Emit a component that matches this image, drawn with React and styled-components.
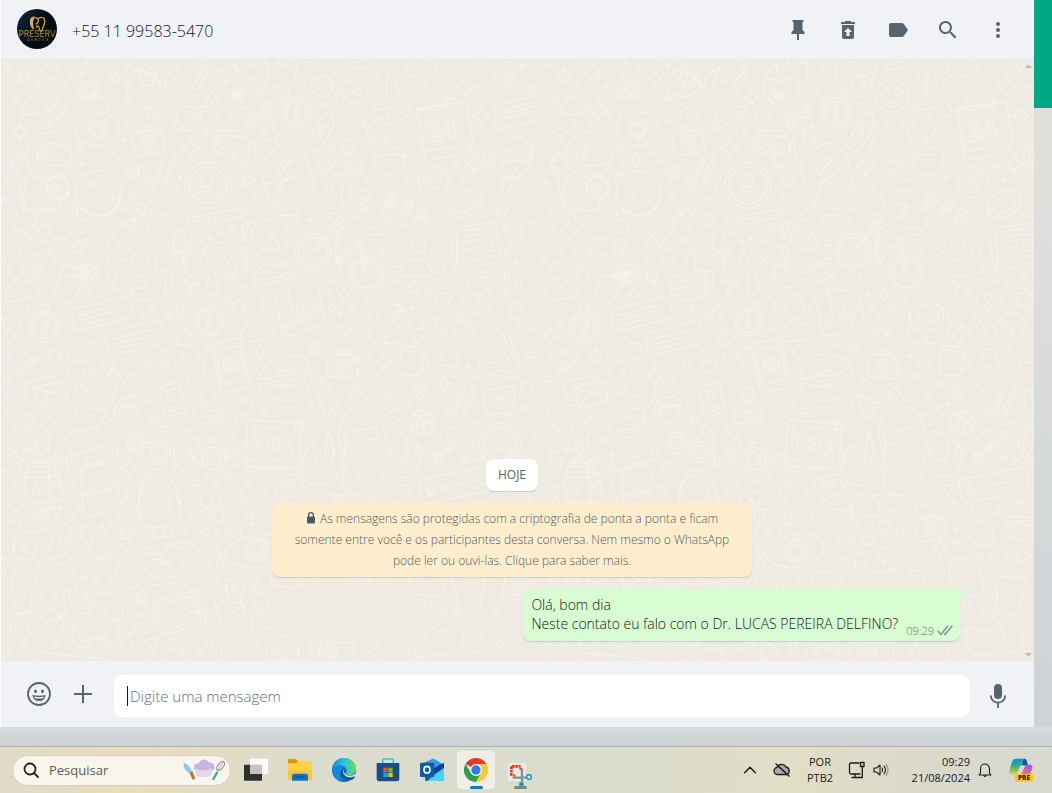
import React from 'react';
import styled, { createGlobalStyle } from 'styled-components';

const GlobalStyle = createGlobalStyle`
* {
	box-sizing: border-box;
}
body {
	margin: 0;
	font-family: "Open Sans", "Noto Sans", sans-serif;
	color: #111b21;
}
button, input {
	font-family: inherit;
}
`;

const Desktop = styled.div`
	display: flex;
	flex-direction: column;
	height: 100vh;
	overflow: hidden;
	background: linear-gradient(#d9dbdb, #ccd2d6 20px, #d2d8db) bottom / 100% 68px no-repeat #d3d7da;
`;

const Browser = styled.div`
	display: flex;
	flex: 1;
	min-height: 0;
	margin-bottom: 19px;
`;

const Chat = styled.main`
	display: flex;
	flex-direction: column;
	flex: 1;
	border-left: 1px solid #fff;
	background-color: #f0f2f5;
`;

const Side = styled.div`
	width: 18px;
	background: linear-gradient(#00a884 108px, #e0dfdc 108px, #dcdddb 300px, #cdd3d7);
`;

const Header = styled.header`
	display: flex;
	align-items: center;
	height: 60px;
	padding: 0 24px 1px 16px;
	border-bottom: 1px solid #e9e9ec;
`;

const Contact = styled.h1`
	flex: 1;
	margin: 0 0 0 15px;
	padding-top: 4px;
	font-size: 16px;
	font-weight: 350;
	line-height: 22px;
`;

const Actions = styled.div`
	display: flex;
	gap: 26px;
	padding-top: 2px;
`;

const IconButton = styled.button`
	display: flex;
	padding: 0;
	border: 0;
	background: none;
	color: #54656f;
`;

const Conversation = styled.section`
	position: relative;
	display: flex;
	flex: 1;
	background-color: #efeae2;
`;

const Wallpaper = styled.svg`
	position: absolute;
	inset: 0;
	width: 100%;
	height: 100%;
`;

const Messages = styled.div`
	position: relative;
	display: flex;
	flex: 1;
	flex-direction: column;
	align-items: center;
	justify-content: flex-end;
	gap: 12px;
	padding: 0 63px 20px;
`;

const Pill = styled.div`
	padding: 5px 12px 6px;
	border-radius: 8px;
	background-color: #fff;
	box-shadow: 0 1px 1px rgba(11, 20, 26, 0.15);
	color: #54656f;
	font-size: 12px;
	line-height: 21px;
`;

const Notice = styled.button`
	width: 480px;
	max-width: 100%;
	padding: 5px 12px 6px;
	border: 0;
	border-radius: 8px;
	background-color: #ffeecd;
	box-shadow: 0 1px 1px rgba(11, 20, 26, 0.15);
	color: #4b5b65;
	font-size: 12px;
	font-weight: 350;
	line-height: 21px;
	text-align: center;
	svg {
		margin-right: 1px;
		vertical-align: -1px;
	}
`;

const Bubble = styled.article`
	position: relative;
	display: flex;
	align-items: flex-end;
	align-self: flex-end;
	gap: 8px;
	padding: 6px 7px 8px 8px;
	border-radius: 8px 0 8px 8px;
	background-color: #d9fdd3;
	box-shadow: 0 1px 1px rgba(11, 20, 26, 0.15);
`;

const Tail = styled.svg`
	position: absolute;
	top: 0;
	left: 100%;
`;

const Text = styled.p`
	margin: 0;
	font-size: 14px;
	font-weight: 350;
	line-height: 19px;
`;

const Stamp = styled.span`
	display: flex;
	align-items: center;
	gap: 3px;
	height: 15px;
	margin-bottom: -5px;
	color: #667781;
	font-size: 11px;
	font-weight: 350;
	line-height: 15px;
`;

const Scroll = styled.div`
	position: relative;
	display: flex;
	flex-direction: column;
	justify-content: space-between;
	width: 11px;
	padding: 5px 2px;
`;

const Arrow = styled.i`
	border: 3px solid transparent;
	border-width: ${(props) => (props.$up ? '0 3px 3px' : '3px 3px 0')};
	border-${(props) => (props.$up ? 'bottom' : 'top')}-color: #b9b8b4;
`;

const Composer = styled.footer`
	display: flex;
	align-items: center;
	height: 66px;
	padding: 4px 24px 0 26px;
	gap: 16px;
`;

const Tools = styled.div`
	display: flex;
	gap: 20px;
	padding: 0 3px 4px 0;
`;

const InputBox = styled.label`
	display: flex;
	align-items: center;
	flex: 1;
	height: 42px;
	padding: 0 13px;
	border-radius: 8px;
	background-color: #fff;
`;

const Caret = styled.span`
	width: 1px;
	height: 20px;
	margin-right: 2px;
	background-color: #111b21;
`;

const Input = styled.input`
	flex: 1;
	min-width: 0;
	padding: 0;
	border: 0;
	outline: 0;
	background: none;
	font-size: ${(props) => props.$size}px;
	font-weight: ${(props) => props.$weight || 400};
	line-height: 20px;
	&::placeholder {
		color: ${(props) => props.$hint};
		opacity: 1;
	}
`;

const Taskbar = styled.nav`
	display: flex;
	align-items: center;
	justify-content: space-between;
	height: 47px;
	padding: 0 19px 0 12px;
	border-top: 1px solid #b1b2ae;
	background: linear-gradient(90deg, #dfdbc9, #e8dcb9 11%, #e5dcc0 18%, #dcdccf 30%, #d9dccd 55%, #e1dec6 76%, #dad9cb 88%, #d8d9d0);
`;

const Apps = styled.div`
	display: flex;
	align-items: center;
	gap: 6px;
`;

const Search = styled.label`
	display: flex;
	align-items: center;
	width: 219px;
	height: 31px;
	padding: 0 5px 0 10px;
	gap: 10px;
	border: 1px solid #d5cfb9;
	border-radius: 16px;
	background-color: #f8f5ec;
	color: #222;
`;

const AppButton = styled.button`
	display: flex;
	align-items: center;
	justify-content: center;
	position: relative;
	width: 38px;
	height: 38px;
	padding: 0;
	border: 0;
	border-radius: 4px;
	background-color: ${(props) => (props.$active ? '#f0eee7' : 'transparent')};
	&::after {
		content: "";
		position: absolute;
		bottom: 0;
		width: 13px;
		height: 3px;
		border-radius: 2px;
		background-color: ${(props) => props.$mark || 'transparent'};
	}
`;

const Tray = styled.div`
	display: flex;
	align-items: center;
	color: #1b1b1b;
`;

const TrayButton = styled.button`
	display: flex;
	justify-content: ${(props) => (props.$end ? 'flex-end' : 'center')};
	width: ${(props) => props.$w}px;
	padding: 0;
	border: 0;
	background: none;
	color: inherit;
	font-size: 11px;
	line-height: 16px;
	text-align: ${(props) => (props.$end ? 'right' : 'center')};
`;

// ---- wallpaper ----

const polar = (x, y, r, deg) => {
	const a = (deg * Math.PI) / 180;
	return `${(x + r * Math.cos(a)).toFixed(1)} ${(y + r * Math.sin(a)).toFixed(1)}`;
};

function Star({ at: [x, y, r] }) {
	const pts = [];
	for (let i = 0; i < 10; i++) {
		pts.push(polar(x, y, i % 2 ? r * 0.5 : r, i * 36 - 80));
	}
	return <polygon points={pts.join(' ')} />;
}

function Spark({ at: [x, y, r] }) {
	const q = r * 0.2;
	return (
		<path
			d={`M${x} ${y - r}Q${x + q} ${y - q} ${x + r} ${y}Q${x + q} ${y + q} ${x} ${y + r}Q${x - q} ${y + q} ${x - r} ${y}Q${x - q} ${y - q} ${x} ${y - r}z`}
		/>
	);
}

function Heart({ at: [x, y, s] }) {
	return (
		<path
			transform={`translate(${x} ${y}) rotate(-8) scale(${s})`}
			strokeWidth={3.6 / s}
			d="M0 10C-5 6-11 2-11-4c0-7 9-8 11-2 2-6 11-5 11 2C11 2 5 6 0 10z"
		/>
	);
}

function Camera({ at: [x, y, deg] }) {
	return (
		<g transform={`translate(${x} ${y}) rotate(${deg})`}>
			<rect x="-44" y="-28" width="88" height="66" rx="8" />
			<path d="M-22-28l5-12h32l6 12M-12-32h22" />
			<circle cy="5" r="20" />
			<circle cy="5" r="11" />
			<circle cy="5" r="4" />
			<circle cx="30" cy="-18" r="5" />
		</g>
	);
}

function Clock({ at: [x, y] }) {
	return (
		<g transform={`translate(${x} ${y})`}>
			<circle r="41" />
			<circle r="32" />
			<path d="M-4-16v16l-5 12c-1 5 5 6 7 2l6-12-3-19c-1-3-5-2-5 1zM8-46c0-14 18-12 19-2M-39-26c-10-9 0-19 10-11" />
		</g>
	);
}

function Face({ at: [x, y, r] }) {
	return (
		<g>
			<circle cx={x} cy={y} r={r} />
			<Heart at={[x - r * 0.42, y - 3, 1.1]} />
			<Heart at={[x + r * 0.35, y - 12, 1.1]} />
			<path d={`M${x - 14} ${y + 22}q16 0 28-8c6 22-22 26-28 8z`} />
		</g>
	);
}

function Cloud({ at: [x, y, s] }) {
	return (
		<path
			transform={`translate(${x} ${y}) scale(${s})`}
			strokeWidth={3.6 / s}
			d="M-20 22c-20 0-23-26-5-28 2-22 30-22 34-6 20-6 30 14 18 24-8 9-28 10-47 10z"
		/>
	);
}

function Person({ at: [x, y] }) {
	return (
		<g>
			<ellipse cx={x} cy={y - 34} rx="18" ry="21" />
			<path d={`M${x - 42} ${y + 44}c-6-40 16-52 42-52s48 14 42 48c0 8-4 8-14 8l-28 1-34 1c-5 0-8-2-8-6z`} />
			<Heart at={[x + 10, y + 28, 1.7]} />
		</g>
	);
}

function Checks({ at: [x, y] }) {
	return (
		<path
			transform={`translate(${x} ${y})`}
			d="M-52 22l7-7 20 16 24-66c3-8 12-5 9 3l-30 78zM4 32l26-72c3-9 13-6 10 2l-26 74z"
		/>
	);
}

const LETTERING = { fontFamily: '"Open Sans", sans-serif', fontWeight: 700 };

const STARS = [
	[68, 47, 22], [446, 151, 28], [787, 216, 30], [721, 352, 22], [229, 544, 24], [372, 567, 26], [1456, 434, 23],
	[1201, 658, 22], [1409, 695, 37], [692, 717, 24], [535, 808, 31], [159, 858, 23], [236, 957, 22], [870, 1060, 23],
	[1029, 969, 23], [671, 1144, 22], [1566, 1083, 22],
];
const SPARKS = [
	[370, 3, 22], [335, 54, 19], [169, 145, 29], [58, 210, 25], [615, 109, 21], [552, 254, 29], [279, 290, 20],
	[945, 309, 26], [1355, 76, 30], [1397, 162, 25], [1380, 301, 28], [86, 494, 30], [998, 682, 18], [753, 847, 22],
	[1113, 878, 24], [28, 804, 25], [144, 1062, 28], [160, 1163, 20], [1289, 941, 22], [823, 4, 22],
];
const HEARTS = [
	[486, 464, 2], [1057, 393, 1.7], [490, 891, 2], [284, 205, 2.5], [284, 207, 1.8],
];
const RINGS = [
	[25, 17, 7], [110, 70, 10], [144, 79, 5], [190, 75, 9], [240, 41, 9], [204, 45, 4], [250, 8, 6], [285, 31, 5],
	[45, 113, 10], [61, 162, 5], [102, 186, 5], [147, 188, 8], [200, 159, 7], [234, 152, 6], [312, 134, 5], [343, 128, 7],
	[378, 113, 5], [408, 152, 7], [373, 179, 9], [360, 231, 6], [228, 257, 11], [32, 245, 6], [326, 272, 7], [239, 303, 6],
	[351, 290, 8], [19, 355, 7], [12, 408, 9], [382, 391, 12], [357, 435, 7], [443, 384, 6], [487, 409, 13], [522, 341, 5],
	[513, 375, 6], [587, 10, 11], [642, 31, 6], [535, 62, 7], [575, 104, 5], [628, 166, 6], [669, 160, 6], [597, 206, 10],
	[799, 86, 12], [839, 89, 5], [862, 217, 5], [940, 130, 8], [1097, 50, 7], [1178, 62, 9], [1236, 104, 8], [1298, 61, 7],
	[1413, 83, 12], [1473, 9, 7], [1518, 19, 9], [1547, 85, 10], [1127, 159, 6], [1056, 187, 8], [1078, 240, 8], [1201, 226, 10],
	[1327, 307, 9], [1345, 348, 6], [1371, 320, 5], [1181, 343, 8], [1065, 349, 7], [957, 368, 13], [966, 409, 5], [904, 433, 9],
	[866, 433, 7], [740, 394, 7], [704, 391, 5], [725, 435, 12], [1111, 435, 7], [1066, 429, 5], [1129, 471, 11], [1175, 477, 8],
	[1238, 465, 9], [1407, 453, 5], [1503, 410, 7], [1545, 427, 7], [1470, 485, 9], [1107, 554, 8], [927, 474, 7], [899, 465, 6],
	[838, 531, 11], [747, 567, 6], [675, 489, 11], [641, 496, 11], [610, 518, 6], [586, 526, 6], [557, 504, 8], [461, 521, 5],
	[432, 485, 5], [418, 521, 12], [297, 498, 15], [252, 520, 5], [127, 525, 8], [40, 486, 8], [40, 446, 11], [12, 583, 8],
	[59, 561, 7], [102, 563, 7], [145, 555, 10], [159, 579, 7], [189, 566, 6], [312, 583, 7], [140, 631, 6],
	[260, 679, 9], [286, 681, 7], [12, 752, 9], [48, 733, 6], [59, 767, 7], [82, 721, 6], [413, 735, 5], [441, 722, 8],
	[658, 690, 9], [740, 681, 7], [761, 693, 8], [774, 724, 13], [676, 780, 8], [604, 837, 8], [576, 855, 9], [532, 862, 6],
	[477, 843, 7], [427, 885, 14], [381, 922, 12], [418, 939, 6], [368, 874, 6], [298, 878, 6], [270, 908, 13], [242, 904, 6],
	[200, 904, 6], [65, 849, 9], [30, 857, 8], [22, 926, 12], [30, 969, 10], [22, 1027, 6], [178, 1031, 7], [186, 1106, 11],
	[77, 1119, 11], [27, 1128, 5], [208, 1140, 5], [433, 990, 9], [448, 1044, 12], [545, 930, 6], [592, 909, 6], [590, 880, 6],
	[705, 985, 9], [732, 996, 7], [768, 1020, 12], [814, 1012, 6], [838, 1014, 7], [687, 1050, 6], [712, 1030, 7], [616, 1104, 10],
	[567, 1099, 7], [548, 1076, 10], [677, 1094, 6], [820, 825, 6], [855, 825, 9], [962, 720, 12], [1025, 720, 12], [986, 738, 7],
	[954, 679, 6], [964, 642, 9], [930, 633, 5], [883, 638, 6], [1064, 694, 6], [1118, 684, 8], [1153, 639, 8], [1244, 672, 9],
	[1270, 638, 6], [1328, 640, 8], [1357, 651, 6], [1408, 624, 12], [1441, 655, 6], [1470, 676, 9], [1343, 692, 6], [1194, 720, 7],
	[1226, 771, 8], [1265, 827, 6], [1073, 860, 7], [1094, 920, 10], [1162, 939, 12], [1128, 972, 12], [1087, 963, 6], [1062, 986, 6],
	[936, 930, 9], [906, 995, 7], [957, 954, 5], [1380, 915, 9], [1320, 915, 6], [1359, 888, 6], [1540, 773, 12], [1540, 856, 12],
	[1523, 1010, 12], [1471, 1036, 9], [1263, 1024, 7], [1198, 1104, 9], [912, 1120, 9], [882, 1150, 8], [1379, 1161, 8], [1349, 1158, 6],
];

// lower part of the tile
const LOW_STARS = [[380, 282, 24], [268, 423, 30], [426, 473, 22], [963, 361, 29], [1451, 351, 25]];
const LOW_SPARKS = [[388, 87, 27], [49, 195, 26], [1199, 322, 24], [1130, 636, 26]];
const LOW_RINGS = [
	[77, 32, 7], [43, 139, 6], [217, 133, 7], [12, 91, 6], [37, 246, 8], [218, 271, 10], [155, 294, 6], [180, 299, 7],
	[207, 299, 9], [141, 318, 9], [228, 334, 6], [260, 362, 7], [305, 258, 7], [331, 250, 7], [356, 232, 6], [387, 233, 10],
	[317, 283, 7], [305, 311, 6], [357, 317, 8], [12, 355, 7], [12, 397, 7], [108, 419, 8], [122, 465, 6], [162, 470, 8],
	[157, 502, 12], [179, 525, 8], [122, 534, 8], [122, 611, 5], [171, 611, 9], [236, 491, 6], [255, 472, 9], [228, 447, 6],
	[318, 401, 9], [331, 424, 6], [422, 525, 9], [411, 560, 12], [438, 574, 6], [391, 581, 6], [395, 608, 6], [530, 70, 9],
	[551, 92, 6], [576, 97, 6], [583, 129, 11], [562, 152, 7], [570, 188, 11], [573, 228, 6], [556, 271, 5], [619, 116, 5],
	[648, 126, 9], [709, 75, 8], [724, 46, 6], [745, 129, 12], [785, 119, 6], [797, 154, 7], [721, 153, 6], [735, 176, 8],
	[617, 276, 12], [649, 276, 7], [686, 279, 9], [639, 297, 5], [613, 316, 6], [627, 434, 7], [648, 418, 7], [647, 447, 6],
	[761, 444, 9], [776, 418, 7], [642, 580, 8], [629, 615, 12], [599, 630, 8], [727, 596, 9], [761, 615, 12], [752, 639, 7],
	[838, 80, 10], [808, 92, 6], [787, 212, 6], [817, 229, 7], [861, 295, 5], [896, 364, 12], [920, 357, 6], [914, 386, 6],
	[955, 249, 8], [1017, 354, 6], [1033, 367, 7], [1053, 209, 8], [1243, 185, 8], [1261, 214, 11], [1295, 209, 6], [1248, 271, 7],
	[1249, 304, 9], [1276, 323, 5], [1322, 350, 8], [1362, 352, 12], [1401, 342, 8], [1355, 387, 6], [1179, 376, 7], [1369, 218, 9],
	[1377, 196, 5], [1352, 27, 8], [1394, 56, 12], [1421, 20, 6], [1447, 48, 6], [1370, 516, 7],
];

function UpperDoodles() {
	return (
		<g transform="translate(-1 0) scale(0.3444)">
			{STARS.map((s) => <Star key={s} at={s} />)}
			{SPARKS.map((s) => <Spark key={s} at={s} />)}
			{HEARTS.map((s) => <Heart key={s} at={s} />)}
			{RINGS.map(([x, y, r]) => <circle key={`${x}-${y}`} cx={x} cy={y} r={r * 0.75} />)}
			<g {...LETTERING} fontSize="66">
				<text x="222" y="118" transform="rotate(-8 222 118)">42</text>
				<text x="1240" y="236" transform="rotate(-6 1240 236)" fontSize="78">24</text>
				<text x="1108" y="418" transform="rotate(28 1108 418)" fontSize="58">B F F</text>
				<text x="674" y="112" fontSize="38">W</text>
			</g>
			{/* dog paw, rocket, flame heart */}
			<path d="M106 4c8 30 44 56 62 52 16-12-8-44-26-66M118-2l26 28M134-6l20 26" />
			<path d="M414 18c-30 16-36 30-52 48l14 2-12 52c18-4 8-18 34-22l10 10c28 0 52-18 66-28M386 34c40-12 68 12 84 46M416 8c28 16 46 44 54 72M410 46c0-22 16-14 14 2 4-18 20-18 18-2l12 16c-10-4-14 4-6 16-12-8-20-8-34 4 8-16-2-22-14-28zM480 48l44-28-34 78c-10 0-14-38-10-50zM558 78l38-52 12 2-34 56c-8 4-16 0-16-6zM572 54l20-24" />
			<path d="M706 142C676 128 648 108 648 80c0-30 38-30 50-8 16-28 54-20 54 10 0 20-24 46-46 60zM652 66c0-36 26-46 34-54l2 24c14-10 28-20 32-36l8 26 28-30-2 18 16-14c16 30 6 70-16 92" />
			<path d="M864-6l-8 74c0 8 50 24 56 26M980 10l-22 68M876 40l12 14-8 8 16-6M896 4l14 6M924 50l8 8M934 70l14-2M932 80l14-2" />
			<circle cx="935" cy="75" r="31" />
			<path d="M1000 18c18 14 80 10 92-20M1000 18c14-14 50-6 62-24M1134 32c20-4 12 58 26 68l60-34c14-8 22 8 8 20l-48 38c12 10 20 30 10 42-18-2-34-30-44-26l-60 6c-12-6 6-24 40-34-6-14-6-74 8-80z" />
			<Cloud at={[1228, 18, 1.3]} />
			<Cloud at={[102, 134, 1.1]} />
			<Cloud at={[1110, 200, 1.2]} />
			<Cloud at={[750, 786, 1.4]} />
			<Cloud at={[250, 842, 1.5]} />
			<Face at={[1023, 105, 47]} />
			<Face at={[1258, 354, 44]} />
			<path d="M1382-4l-6 18 12 2-2 28 24-36h-14l4-16M1430 42l66-4c4 10-16 36-20 46l-14-16zM1462 68l10-22" />
			{/* calendar */}
			<path d="M1210 146l28-6M1266 136l28-4M1322 126l26-4c6 0 8 6 8 12l18 106c0 10-100 16-142 26-12 2-6-60-22-120-1-4 4-6 10-6zM1228 210l6 78c1 8 130-20 134-26l-2-16" />
			<rect x="1242" y="116" width="22" height="30" rx="6" />
			<rect x="1296" y="110" width="22" height="30" rx="6" />
			{/* chat cards */}
			<path d="M1446 132l124-34M1446 132c-10 2-12 8-10 18l4 34-12 14 18-4 4 8 120-28M1454 146l114-28M1454 158l114-26M1456 172l90-22" />
			{/* flower badge, planet, glasses */}
			<path d="M224 190c2-22 16-26 30-30 12-16 28-10 34-6 16-8 28 2 32 8 18 2 18 18 22 26 14 14 0 24 0 30-8 16-20 16-26 20-14 14-24 12-34 8-14 10-24 2-30-6-24 4-22-12-24-20-10-8-12-18-4-30z" />
			<Camera at={[430, 235, -10]} />
			<circle cx="547" cy="170" r="36" />
			<path d="M516 176c-40 30-8 34 30 10s64-54 48-52l-20 6M504 188l80-40" fill="#efeae2" />
			<path d="M630 204l86 2-4 18-74-6c-30 8-20 48 4 54 20 4 22-22 34-22s10 14 0 30c4 26 36 42 46 20l20-2-4-66-14 8 2 40" />
			<circle cx="644" cy="240" r="16" />
			<circle cx="696" cy="288" r="17" />
			<path d="M764 132l24-12-4 40a8 8 0 1 1-6-10l2-16-8 4-4 24a8 8 0 1 1-6-8zM728 206c-6-16-16-24-16-32 0-24 34-22 34 0-2 12-12 22-18 32z" />
			<circle cx="729" cy="177" r="8" />
			<Clock at={[862, 152]} />
			<Clock at={[608, 759]} />
			<path d="M954 152l14 4-2 18c6 8 4 16 0 24l-36 64c-10 8-36-4-40-16l38-74c6-6 16-14 26-20zM914 180l48 20M902 214l44 22M932 194c10 14 6 20 0 20s-8-8 0-20zM1004 182c20 20 16 28 6 28s-10-12-6-28zM966 230c12 20 10 32 0 32s-12-12 0-32zM1118 228c12 12 10 20 2 20s-8-10-2-20z" />
			{/* astronaut */}
			<circle cx="141" cy="276" r="66" />
			<path d="M202 300c-18 6-60 8-86 2-14-12-8-50 20-58 26-6 44 2 62 14M122 282c0-18 10-26 18-26 8 8-8 18-10 32-2 6-8 0-8-6zM68 266c-40 12-40 50-26 62l8-16M36 288l14 6M36 310l14-2M52 274l10 12M52 326c4 40 8 80 16 110M82 336c12-6 76 26 80 68 16-8 18 6 6 14 16 12-6 20-34 18l-60-4c-10-30-2-92 8-96zM98 438c4 60 40 30 44 50-4 40 64 50 68 4 20 30 60-4 44-22-18-14-26 4-34-8 14-30-6-48-16-46M160 390c-30 6-36-42 0-54 40-8 44 30 38 60-12 12-22-8-38-6zM200 324l40 2c-10 10-22 6-22 26" />
			<circle cx="167" cy="372" r="32" strokeDasharray="7 5" />
			<circle cx="167" cy="372" r="9" />
			<circle cx="286" cy="386" r="65" />
			<path d="M230 420c6 26 54 38 80 28 26-4 34-28 40-56M254 370c4-10 14-16 24-14-2 10-14 16-24 14zM306 350l12-10M316 412c-6-16 8-22 12-14 2 8-6 16-12 14zM270 396c-8-16-2-10 6-4zM252 404l14 8" />
			<path d="M360 332l44-30-4 46-12-10-8 12-4-16zM382 334l12-20" />
			<Checks at={[470, 324]} />
			<Checks at={[1340, 994]} />
			<circle cx="604" cy="364" r="67" />
			<circle cx="604" cy="364" r="54" />
			<circle cx="600" cy="352" r="18" />
			<path d="M562 402c10-28 70-28 82 0M546 460l150-28c14 0 12 20 2 24l-138 26c-14 0-22-18-14-22z" />
			<path d="M566 467h3M586 464h3M604 462h3M622 459h3" strokeWidth="7" />
			{/* open letter */}
			<path d="M766 358c-4-28-16-50-6-62 24-24 46-50 76-56 14 8 50 16 54 38l24 96c2 8-110 50-118 52-14-2-26-60-30-68zM766 358l50 4 72-58M816 362l-20 60M810 358c14-8 24-18 36-16l66 36M804 318l34-38c8-2 8 6 4 12l-28 36c-6 4-12-4-10-10zM822 322l26-32" />
			<Person at={[1010, 284]} />
			<path d="M1084 276c4-20 70-30 84-14 12 30 0 58-20 66l-34 10c-22-12-34-40-30-62zM1088 290c14-24 58-14 80-14M1170 282c32-12 32 26 2 22M1002 360c8-6 20 8 18 18-12 20 14 44 24 40 8-8 24 6 14 14-6 8-10 8-14 8M1002 360c-30 28 2 96 44 98l10-2c10-8 0-24-10-26" />
			{/* see-no-evil monkey and donut */}
			<circle cx="1482" cy="282" r="62" />
			<path d="M1434 310c-8-50 16-64 48-46 28-30 64 4 54 32M1460 308c8-16 18-14 32-18 24 6 40 12 50 6M1460 308l6 34 14 4 20-34M1420 244c-26 18-12 50-4 56M1530 236c28 10 16 40 8 48M1472 344c-10 12-26 34-10 40s30-20 18-34M1502 344c8 12 20 38 30 26s-6-28-14-36" />
			<circle cx="1460" cy="284" r="12" />
			<circle cx="1504" cy="276" r="12" />
			<ellipse cx="1348" cy="418" rx="53" ry="36" transform="rotate(-28 1348 418)" />
			<ellipse cx="1344" cy="408" rx="12" ry="9" />
			<path d="M1300 432l10 10 8-10 14 16 12-8 10 6 8-18 12 4 10-24 14-4M1318 410l8-6M1360 396l8-4M1370 406l4 6" />
			<g id="quotes">
				<path d="M420 432a12 12 0 1 0-10 8q0 6-6 12c12 0 16-10 16-20zM452 428a12 12 0 1 0-10 8q0 6-6 12c12 0 16-10 16-20z" />
			</g>
			<use href="#quotes" transform="translate(82 300)" />
			<use href="#quotes" transform="translate(564 352)" />
			{/* pencils */}
			<path d="M396 458l-10 40-46 50c-14 6-34-10-30-22l50-54zM318 510c10 2 24 16 30 28M360 472l24 20M388 464l-4 12M704 490c-6-18 18-22 24-18l64 32 22 46c0 4-52-2-56-4l-52-30zM722 474l-10 40M740 480l-14 40M792 504l-22 42" />
			{/* microphone, thumb, monkey */}
			<rect x="504" y="494" width="34" height="64" rx="17" />
			<path d="M492 532c4 60 62 54 68 0M500 532c6 44 48 38 52 0M530 576l6 30c6-4 2-18 2-32M386 628c18-22 44-22 46-76 18-4 20 24 20 42l-2 18c16-2 32 2 32 18l-4 54c-22 8-50 20-76 14-16-8-22-12-20-30-8-16 0-22 0-40zM386 630c20-6 44-2 40 10-8 6-24 2-38 2M384 662c20 4 38 0 42-8M388 682c20 2 34-4 34-14M478 616c36-16 22 26 24 46-8 14-18 8-22 6" />
			<path d="M596 562c-14-16 44-50 92-24 26 20 36 50 22 80M598 582c4 16 38 30 54-6 14 34 58 20 58-6M606 578c-2-10 14-16 18-12M626 576l6-12M644 574l4-14M672 574l-4-12M688 580l-8-14M650 626c10 8 24 2 28-6 2 28-28 26-28 6zM592 548c-18 30-6 50 6 54l8 32c-8 24-6 52 10 50 24-4 24-48 2-70M700 546c28-20 22 30 8 50M686 604c-20 24 20 66 44 56s8-44-20-60l-6-8" />
			<path d="M528 646l28-20 20 30c-8 2-12-6-18-10l-6 38c-4 6-12 2-10-4l10-34c-8 0-16 8-24 0zM752 606l20-18 12 10 60-22c6 4 4 10 2 14l-52 12-12 16-14-4-22 8c-4-4-4-12 6-16zM760 638l60-8 8-14 14 8 14-6c0 14-12 12-12 12l-14 8-74 16c-6-8-4-14 4-16z" />
			<path d="M814 452l54-2c4 8-20 36-34 44-4-16-12-34-20-42zM758 458c0-22 30-22 32-2 0 8-2 14-4 14-4-2-8-4-10-8-6 4-18 2-18-4z" />
			{/* bicycle */}
			<circle cx="909" cy="556" r="52" />
			<circle cx="909" cy="556" r="42" />
			<circle cx="1065" cy="622" r="50" />
			<circle cx="1065" cy="622" r="40" />
			<path d="M914 556l72-84M908 550l66-78c-16-12-26-22-14-28 12-2 36 10 38 22-6 12-18 2-22-4M988 484l54 40-64 52zM978 494l-8 86 12 8 60-56 14 84 8-2-14-94 22-12 40-2c-2-20-30-20-56-18l4 14M984 576l-16 30M992 576l-8 36" />
			<ellipse cx="1215" cy="537" rx="20" ry="23" />
			<ellipse cx="1165" cy="541" rx="13" ry="17" />
			<ellipse cx="1265" cy="553" rx="14" ry="17" />
			<path d="M1162 624c-4-60 86-62 92 0-10 10-80 4-92 0zM1168 576c-20-16-40-2-40 18 8 10 22 6 32 8M1248 580c22-10 44 10 42 32-8 8-24 4-36 2" />
			<path d="M1326 500c-4-6 0-12 6-14l96-14c8 0 10 6 12 12l14 88c0 10-4 12-10 14l-104 26c-8 2-12-4-14-12zM1318 526c-14 2-6 30-4 46l8 38M1344 498l80-14M1346 514l44-8M1348 530l42-10M1350 550l44-8M1352 588l90-22" />
			<rect x="1402" y="506" width="28" height="48" rx="6" transform="rotate(-6 1416 530)" />
			<path d="M1568 464l-54 16 4 54-38-8c8 16 26 22 50 46M1472 550c8 16 6 30-2 30s-8-14 2-30zM1496 580c16 16 14 28 6 28s-8-14-6-28zM1472 602c12 20 6 34-2 32s-8-18 2-32zM1504 630c14 18 12 36 2 36s-12-18-2-36z" />
			{/* contact, drinks, compass */}
			<ellipse cx="46" cy="612" rx="20" ry="24" />
			<path d="M18 704c-6-40 10-58 28-62l14 16 16-18c24 4 36 22 36 44zM96 590c8-4 10 4 10 14l18 2c2 8-8 10-16 10 0 10-6 22-10 14v-10l-18-2c-4-8 6-12 16-12zM184 592l74 26c-20 20-26 56-48 82-6 12-54-4-54-14 12-20 18-66 28-94zM176 626h66" />
			<circle cx="253" cy="618" r="36" />
			<circle cx="253" cy="618" r="26" />
			<path d="M253 594v48M229 618h48M236 602l34 34M236 636l34-34M330 640l6 28M320 670l26-6" />
			<circle cx="324" cy="629" r="15" />
			<circle cx="130" cy="775" r="45" />
			<circle cx="130" cy="775" r="35" />
			<circle cx="130" cy="720" r="14" />
			<path d="M124 778l16-26-4 32-14 14zM130 744v6M130 800v6M98 775h6M156 775h6" />
			<path d="M218 722l146-34c8-2 12 2 14 10l6 40c0 8-4 10-8 12l-142 36c-8 2-10-4-12-10l-18 6c4-12 6-16 10-18l-6-32c0-6 4-8 10-10zM228 742l110-30M232 756l110-30M236 770l68-16M314 792l140-36c10-2 12 10 16 26l22 16-18 24-150 36c-14 4-10-32-20-54-2-6 4-10 10-12zM332 810l116-28M334 824l70-16M338 838l70-16" />
			{/* phone, lips, map */}
			<rect x="626" y="814" width="88" height="146" rx="12" transform="rotate(-12 670 886)" />
			<rect x="634" y="836" width="72" height="100" rx="3" transform="rotate(-12 670 886)" />
			<circle cx="671" cy="885" r="23" />
			<circle cx="671" cy="885" r="15" />
			<path d="M664 876c0 10 8 18 16 18M748 926c20-40 52-82 80-68l18 6c20-10 42 2 56 14-16 30-50 44-84 38-20 0-46 14-70 10zM754 944c20-14 40 6 70 6 40-2 64-30 82-54 0 40-14 88-60 92-44 4-88-14-92-44zM806 916l8-16 10 10 12-16 12 12M806 934l60-8M812 940l8 10 12-12 10 12" />
			<path d="M798 686l42-22 48 6 34-12c8 26 12 70 20 108l-40 14-46 20-36-2c-8-30-12-80-22-112zM818 770c44-14 78-30 112-62M820 780c44-14 80-32 112-60M898 744l12 32M836 666l14 80" />
			<path d="M870 738c-10-14-14-28 2-30s16 16-2 30z" />
			<circle cx="1134" cy="746" r="38" />
			<path d="M1080 770c-20-40 4-64 30-62M1152 708c30 16 50 56 34 84-12 26-48 36-70 30M1070 784c20-12 52 10 54 34-20 16-60 2-54-34zM1134 768c-8-16 10-34 28-38-4 14-10 28-28 38zM1198 804c4-30 40-34 50-6-6 6-14 4-22 4s0 14-6 20c-14 2-20-8-22-18z" />
			{/* guitar */}
			<path d="M1268 690c8-20 28-18 44-4-2 16-16 18-20 28-14 10-28-12-24-24zM1298 702l76 80M1288 714l80 76M1350 738c20-16 56 0 60 36 20 10 54 4 60 50 0 36-18 54-46 56-28-2-48-12-56-34-14-40-46-30-48-66 0-14 10-24 24-26M1412 832l12-14M1392 882c-4 20 14 32 50 32 24 10 40 10 58 6-14-14-28-18-50-20M1476 796l12 36c12 20 22 36 24 52l-30-28-12 24" />
			<circle cx="1388" cy="795" r="17" />
			<path d="M1256 744l20 8 4 10 14 8 4 24-30-18-2-12zM1476 712l30-8 8 22-10 40-10-22-18 8 4-22zM1280 874c6-30 12-34 20-36 28 2 24 30 34 50-22 8-46-2-60-4z" />
			<Camera at={[996, 884, 5]} />
			<path d="M1164 838l68 14-12 60c-10 8-48 6-60-4zM1164 838c0-16 70-8 68 10M1224 866c28-6 28 36-4 30M904 826l24-12-4 40-8-4 4-24-10 6-4 20-8-4z" />
			{/* letters, scooter, card */}
			<path d="M68 938l86-22c6 14 4 20 2 22M68 938l12 60c2 6 14 6 22 4M102 952l84-22c10 18 10 44 10 60l-80 22c-8-20-14-40-14-60zM104 954l48 12 36-34M116 1008l26-42M194 988l-36-24M54 896l48-36c10 0 10 10 4 14l-42 36c-12 2-12-8-10-14zM62 902l44-34" />
			<path d="M200 1078c0-64 90-84 104-50 6 40-60 48-104 54zM218 1022c16-30 50-50 80-44 2 12-8 26-14 30M232 1046l36-14M226 1078c0 24 58 32 60-14M296 1058c-4 2 38-14 36-24-4-70 80-70 76-32l-74 12M336 936c2 40-12 72-42 80M350 926c14 18 30 40 36 48M288 928l30-18c24-20 36 12 28 24-20 6-30-10-28-24l14-30 6 4-10 24" />
			<circle cx="374" cy="1026" r="28" />
			<path d="M464 952l48-18c4 0 8 4 12 10l14 80-60 12zM478 962l34-8M492 1010l28-8 2 10-28 8z" />
			<circle cx="497" cy="976" r="12" />
			<Person at={[604, 1005]} />
			<path d="M922 970l66 30c0 12-14 6-24 12s-2 32-16 30c-12-18-18-50-26-72zM962 1012l14 18M1218 990c-10-16-16-22-16-28 2-22 32-20 34 0-2 12-12 18-18 28z" />
			<circle cx="1218" cy="963" r="6" />
			<path d="M1404 960l92-16-4 76-78 10c-6-20-8-50-10-70zM1424 980l50-8M1426 990l40-8M1428 1000l32-8M1518 934l32 6-4 20-14 18-14-4 6-14-10-2z" />
			<circle cx="1225" cy="1054" r="35" />
			<path d="M1200 1032c20 0 50 20 58 38M1212 1086c-10-30 8-50 30-62M1192 1062c24 4 54-8 66-20M1228 1020c-6 24 0 44 10 68" />
			{/* turntable and dinosaur */}
			<rect x="716" y="1050" width="156" height="134" rx="10" transform="rotate(3 794 1116)" />
			<circle cx="795" cy="1114" r="48" />
			<circle cx="795" cy="1114" r="17" />
			<circle cx="795" cy="1114" r="5" />
			<path d="M820 1098l24 14 6 46M738 1064l6 18-6 16-8-18zM1000 1166c0-40-30-70-8-116 20-60 90-60 114-8 20 50 10 80 28 110M1110 1034l80-40c-10 32-36 64-66 66M998 1086l96-22 2 30c-10 14-28 10-34-6-8-4-14 0-16 8-2 24-36 26-42 10zM944 1166c-4-30 8-50 8-86 16 24 22 54 10 86M1136 1080c50-10 60 50 40 86M1200 1166l12-50c12 14 22 34 20 50" />
			<path d="M1252 1126l38-50 92-26c10 8 2 22-8 30l-110 78zM1290 1076l14 30M1264 1148l110-82M1316 1078l4 8M1336 1072l4 8" />
			<circle cx="1452" cy="1115" r="60" />
			<circle cx="1452" cy="1115" r="48" />
			<circle cx="1447" cy="1107" r="15" />
			<path d="M1418 1152c4-26 56-28 70-4M66 1020h8l2 12 12-6 8 10-6 10 10 2v12l-12 2 4 12-8 8-10-6-4 10h-12l-2-12-12 4-6-10 6-8-12-4v-10l12-2-4-12 8-8 10 6z" />
			<circle cx="68" cy="1051" r="13" />
			<path d="M84 1130l24 8-6-34 18 14 18-22 4 36-34 12M94 1168l26-26 4 20zM370 1120c20-14 80 0 100-30 10-14 0-16-6-24 30-10 44 20 42 50v70" />
		</g>
	);
}

function LowerDoodles() {
	return (
		<g transform="translate(-1 380) scale(0.3333)">
			{LOW_STARS.map((s) => <Star key={s} at={s} />)}
			{LOW_SPARKS.map((s) => <Spark key={s} at={s} />)}
			{LOW_RINGS.map(([x, y, r]) => <circle key={`${x}-${y}`} cx={x} cy={y} r={r * 0.8} />)}
			<Heart at={[166, 562, 2.5]} />
			<Heart at={[761, 77, 2]} />
			<Heart at={[494, 384, 1.5]} />
			<path d="M28 40l24-6-2 18 18 2-8 32-12-20-14-2zM246 262l30-4-6 18 16 4-22 46-4-26-16-2z" />
			{/* milk, bread, leaf */}
			<path d="M84 70h64v10l30 22 12 76-40 10-70-4-8-72 14-32zM74 112h72l6 74M146 112l30-12M84 80h62v30M108 130c-16 28-12 32 0 32s12-12 0-32zM156 132l20-10v10l-20 10z" />
			<path d="M62 256c-8-20 30-34 50-42 40-14 90-18 104 2 10 24-18 38-46 44-40 12-104 30-108-4zM98 250l14-34c10 8 0 20 8 30l16-38c10 8 0 20 8 30l16-34c10 6 2 18 8 28l14-28" />
			<path d="M38 290c14 10 56-10 70 20 6 16-4 28-10 36l8 16-14-8c-20 10-40 6-50-6-2-20 0-40-4-58zM54 308l44 38M76 328l6-16M76 328l-16 2M108 376l90-36c8-2 8 4 10 8l18 54-70 34c-12-4-18-34-26-48zM146 386l46-18M152 402l46-18M292 356c4-6 14-6 16-2l6-20 20 2-6 24c-8 6-16 0-10-8l4-10-10-2-4 16c-6 6-14 6-16 0z" />
			{/* backpack */}
			<path d="M200 52l126-40c18-4 38 24 22 44l-126 42c-16 4-28-34-22-46zM212 50l12 44M332 14l12 44M260 72c-4-30 36-30 38-4M246 156c0-50-8-74 30-86 50-4 54 24 74 66 10 40 24 64 0 72l-78 20c-30 0-22-46-26-72zM246 162c40 8 70-10 104-26M244 166c-14-2-16 20-10 40 6 12 12 8 18 8M354 138c22-8 28 18 26 36-4 10-8 14-16 14" />
			<rect x="278" y="150" width="12" height="22" rx="5" />
			<rect x="322" y="142" width="12" height="20" rx="5" />
			{/* parka, goggles, magnifier */}
			<circle cx="465" cy="147" r="40" />
			<path d="M436 260c-30-60-24-170 30-172 52 0 64 50 78 144-10 30-90 34-108 28zM442 144q8-8 12 0M472 140q8-8 12 0M452 154q8 12 18 0M418 184c-14 12-6 40 4 58l10-4M506 178c8-20 30-10 34 4v36c-12 8-24 4-28-6zM470 262l-6 10c-10 2-6 18 2 20l52-4v-34M492 262v22" />
			<circle cx="410" cy="8" r="30" /><circle cx="410" cy="8" r="20" />
			<circle cx="482" cy="36" r="30" /><circle cx="482" cy="36" r="20" />
			<circle cx="641" cy="56" r="34" /><circle cx="641" cy="56" r="20" />
			<path d="M624 30c-30-14-48 4-38 34 10 14 26 8 38 14M664 88c8-10 20 2 30 24-2 10-10 12-14 8zM562 14c12-6 18 14 10 20s-22-14-10-20zM588-6c10-6 14 16 10 24M560 44c8-8 20 4 18 14s-20 2-18-14z" />
			<path d="M640 190c-20-30 10-48 26-28-4 20-10 22-12 30 16-30 48-12 38 10-12 12-24 2-34 6 28 14 8 50-12 36l-4-34c-12 38-46 22-38 4 6-10 20-8 30-12-40 2-40-34-22-34 16 0 22 14 28 22z" />
			<circle cx="650" cy="202" r="7" />
			{/* heart hands */}
			<path d="M496 432c-40 10-70-10-78 0l-20 16c-14-8-38-24-54-50 22-16 12-60 52-70 40-14 84 4 90 30M496 432c4-24-50-12-58-46-2-30 40-36 56-14M414 354c8-30 50-12 60-10M496 322c30-26 80-18 100 6 4 20 24 36 38 42-10 30-30 54-44 50-10-22-64 22-84 8 0-24 40-20 42-50-4-30-34-28-56-6M496 328c-14 14-10 26-4 32M502 324c20-8 40-4 54 8" />
			{/* submarine */}
			<path d="M672 338c30-44 80-60 148-52 30 8 40 48 22 62-30 40-120 48-164 6zM722 288c-8-30 8-34 24-34 50-2 36 14 42 30M738 254l-4-46c4-14 30-10 32 4-2 8-6 10-14 6l4 36M736 220h18M738 234h16M660 350c-20-28-14-40 0-20 6 16-20 34-2 58 20 10 14-24 2-38zM650 346h22" />
			<circle cx="770" cy="332" r="34" />
			<circle cx="770" cy="332" r="20" />
			<circle cx="770" cy="332" r="27" strokeDasharray="6 12" />
			{/* bottle, dog, picture */}
			<path d="M46 406v-12l14-2 6 12c22 14 26 60 32 112l-46 8c-8-34-20-80-18-104zM54 522l44-10M60 440c-14 26 4 34 10 30s6-16-10-30zM40 544c-18 30-8 34 0 34s12-16 0-34zM88 542c-12 26 0 40 12 42 18-8 6-26-12-42zM70 590c-14 22-8 30 0 32s18-12 0-32z" />
			<path d="M206 446c-24 0-20 90 14 96 6 30-20 80 30 80 28-6 24-16 10-20l44-10c10 24 20 30 34 24 24 6 34-8 20-18M240 584c-4 30 20 20 22 14M354 534c-4 50 4 60 8 70M316 578c-4 20 6 30 22 30M206 446c-8 54 36 82 62 72-14-36 10-60 46-56 56-8 80 50 66 72-14 14-36 8-52 6M284 486c40 0 36 70 8 62-26-10-30-50-8-62M344 494v3M362 500l8 2-4 8M362 510l10 4" />
			<rect x="470" y="464" width="138" height="106" rx="10" transform="rotate(-14 539 517)" />
			<rect x="482" y="478" width="114" height="78" rx="2" transform="rotate(-14 539 517)" />
			<path d="M498 554l26-36 22 18 26-22 34 10M510 460l50-22 14 20M486 578l34 22 26-20M466 516c-14 8-8 26 8 36M614 490c10 20 8 30-4 40" />
			<circle cx="570" cy="488" r="11" />
			<path d="M682 476l-4-48c0-14 18-14 20 0l6 40 8-42c6-12 22-4 20 6l-10 50c24 22 14 76-26 78-30 4-42-24-44-54-20-30 6-46 18-18 12-20 20-14 14 4M690 492c26-14 40 0 40 8-6 10-20 6-24 2M690 520l16-6M664 596l54 36-54 28zM752 576c0-40 16-60 34-56l12 12 22-16M752 576l70-14M380 656l56-54 40-8-14 44-26 22M442 602l18 34M112 662c0-30 6-24 20-24l190 20M486 662c-4-30 20-44 36-34 24-2 34 16 36 34M542 620c-4 18 4 26 6 20s4-14-6-20zM12 614c30-14 24 34 0 36" />
			<ellipse cx="784" cy="484" rx="22" ry="26" />
			{/* note, dinosaur feet, fish */}
			<path d="M820 122l76-22c6 14 8 22 12 42l10-4 2 10-16 12-44 14-10 14-4-14c-14 0-22-32-26-52zM838 130l44-12M842 140l42-12M846 150l42-12" />
			<path d="M926 22c-40 70-20 118 44 114 46-10 70-60 66-130M946 44c0 48 36 36 58 0M1050 66c-24 20-30 60-6 94 4 10-10 8-22 6l-48-4c-30-4-46 20-40 44 8 26 50 22 84 20 6-30-6-44-20-50 14-22 30-10 32 10M1044 160l66 10c30 20 30 50-20 58-14 2-18-20-8-20 14-6 20-10 22-20M1144 40c20 60 60 90 100 60 24-30 20-60 12-94M1170 20c10 50 30 60 54 20M1146 98c-10 40 20 44 80 38 16-4 10 14 0 26-20 20-50 34-84 38M1090 84c-20 16-20 40 4 50" />
			<path d="M828 248c6-20 30-38 62-42l34 12 12-18-2 26 4 12-20-4c-30 24-60 32-88 22zM850 234l4 8M880 222l8 18" />
			<circle cx="920" cy="302" r="24" strokeDasharray="11 6" />
			<circle cx="920" cy="302" r="10" />
			<circle cx="1034" cy="258" r="17" />
			<circle cx="990" cy="270" r="12" />
			<circle cx="1080" cy="276" r="12" />
			<path d="M996 318c0-50 66-48 70 0-20 8-50 4-70 0zM990 290c-30-4-24 20-20 22l24 2M1072 292c22 0 24 14 22 20l-24 2" />
			<path d="M1268 118l186-38c14-4 4 14 10 24l4 48-190 38c-14 2-16-28-22-58 0-8 4-12 12-14zM1322 132l26 10-20 14zM1360 134l84-14M1424 142l6 8 16-20M1286 134c8-6 12 4 12 20-4 14-14 8-14-2zM1280 150c6 22 24 18 24 0M1294 166v8" />
			<path d="M1316 92c-14-20-26-50 0-52s18 28 0 52z" />
			<circle cx="1315" cy="58" r="8" />
			<path d="M1392 230c6-60 80-60 94 0zM1390 244h100M1394 256c20-10 20 14 40 0s30 10 56 0M1392 276h98M1396 290l90 16M1414 210l4 4M1440 200l4 4M1460 216l4 4" />
			<Camera at={[1170, 262, -10]} />
			<path d="M1286 290c20-60 30-40 48-50 22 2 24 24 30 80l-46-4c-18-6-30-18-32-26zM1344 258l6 32M1106 376c-30-60-20-64-2-48 6-24 20-14 26 4 20-16 34 0 10 34zM1112 376l-6 70M1094 420c20-40 60-40 58 10M816 400c30-16 60 0 78 12l14-6-4 30-16-2-4 10-70-10zM938 440c10-40 60-60 90-40 40-30 60 10 30 16-10 24-20 26-30 26M1230 430c-8-80 10-80 60-70 40 10 50 110 34 112l-80-10M1248 410l8 4M1280 404l8 4M1262 426q6-8 12 0M1270 474c0 14 4 30 14 30s10-14 8-26M1354 416c40-20 60 10 90-10 30 20-10 60 0 90-10 40-50 30-80 0 20-20 0-60-10-80zM1334 504c14 16 10 26 0 26s-10-12 0-26zM1360 514c14 12 10 22 2 22s-8-10-2-22z" />
			<path d="M1280 576c10-26 20-14 34 0l40-6 24-22c8 24 18 50 10 70-14 30-90 40-102 8-10-14-8-34-6-50zM1310 600q6-8 12 0M1350 590q6-8 12 0M1328 612l8-4 4 6M1430 560c30 0 10 40 20 60 0 20-30 10-40 20M1230 660c-14-40 10-50 20-14l6 10 10-22c14 0 8 20 4 30M930 606l130 2v60h-130z" />
			<text x="952" y="654" {...LETTERING} fontSize="58">Hi</text>
			<Face at={[848, 636, 48]} />
			{/* right edge */}
			<Cloud at={[1560, 60, 1.4]} />
			<Camera at={[1556, 440, 8]} />
			<Star at={[1530, 140, 24]} />
			<Spark at={[1540, 360, 26]} />
			<Heart at={[1530, 560, 2]} />
			<circle cx="1590" cy="180" r="8" />
			<circle cx="1520" cy="220" r="6" />
			<circle cx="1570" cy="270" r="9" />
			<circle cx="1590" cy="330" r="5" />
			<circle cx="1490" cy="520" r="8" />
			<circle cx="1585" cy="540" r="6" />
			<circle cx="1500" cy="610" r="9" />
		</g>
	);
}

function Doodles() {
	return (
		<Wallpaper aria-hidden="true">
			<defs>
				<pattern id="doodles" width="540" height="602" patternUnits="userSpaceOnUse">
					<g fill="none" stroke="#f6f2ec" strokeWidth="3.6" strokeLinecap="round" strokeLinejoin="round">
						<UpperDoodles />
						<LowerDoodles />
					</g>
				</pattern>
			</defs>
			<rect width="100%" height="100%" fill="url(#doodles)" />
		</Wallpaper>
	);
}

// ---- icons ----

function Glyph({ size = 24, children }) {
	return (
		<svg width={size} height={size} viewBox="0 0 24 24" fill="currentColor" aria-hidden="true">
			{children}
		</svg>
	);
}

const ACTIONS = [
	['Fixar', 'M6.5 2h11v2h-1v8l2 2v2H13v6h-2v-6H5.5v-2l2-2V4h-1z'],
	['Apagar', 'M9.5 3h5l1 1H19v2H5V4h3.5zM6 7h12v12a2 2 0 0 1-2 2H8a2 2 0 0 1-2-2zM12 10l-4 4h2.5v4h3v-4H16z'],
	['Etiquetas', 'M17.6 5.8C17.3 5.3 16.7 5 16 5H5a2 2 0 0 0-2 2v10a2 2 0 0 0 2 2h11c.7 0 1.3-.3 1.6-.8L22 12z'],
	['Pesquisar', 'M15.5 14h-.8l-.3-.3a6.5 6.5 0 1 0-.7.7l.3.3v.8l5 5 1.5-1.5zm-6 0a4.5 4.5 0 1 1 0-9 4.5 4.5 0 0 1 0 9z'],
	['Menu', 'M12 8a2 2 0 1 0 0-4 2 2 0 0 0 0 4zm0 2a2 2 0 1 0 0 4 2 2 0 0 0 0-4zm0 6a2 2 0 1 0 0 4 2 2 0 0 0 0-4z'],
];

function Avatar() {
	return (
		<svg width="40" height="40" viewBox="0 0 120 120" role="img" aria-label="Preserv Dentes">
			<defs>
				<clipPath id="round"><circle cx="60" cy="60" r="60" /></clipPath>
				<linearGradient id="navy" x1="0" y1="0" x2="1" y2="0.6">
					<stop offset="0" stopColor="#0e2a40" />
					<stop offset="0.6" stopColor="#050b16" />
				</linearGradient>
			</defs>
			<g clipPath="url(#round)">
				<rect width="120" height="120" fill="url(#navy)" />
				<path d="M49 60c-8-8-12-28-4-34 8-5 13 3 19 2 6-3 13-5 18 1 5 12-3 20-6 33-2 9-8 5-10-6-2-8-6-6-9 0M60 28c6 6 6 12-4 18" fill="none" stroke="#c99b3c" strokeWidth="4" />
				<path d="M39 40c0-11 6-15 14-14-8 12-4 24-2 34-7-2-12-10-12-20z" fill="#ddb04c" />
				<g fill="#b68a36" fontFamily="Inter, sans-serif" textAnchor="middle">
					<text x="60" y="84" fontSize="25">PRESERV</text>
					<text x="62" y="97" fontSize="12">D E N T E S</text>
				</g>
			</g>
		</svg>
	);
}

function TaskViewIcon() {
	return (
		<svg width="24" height="24" viewBox="0 0 72 72">
			<rect y="20" width="54" height="48" rx="2" fill="#30302f" />
			<rect x="18" y="2" width="54" height="46" rx="2" fill="#fbfbfa" />
			<path d="M18 20h36v28H18z" fill="#c3c3c1" />
		</svg>
	);
}

function FolderIcon() {
	return (
		<svg width="24" height="24" viewBox="0 0 72 72">
			<path d="M0 6q0-3 3-3h21l7 7-7 9H0z" fill="#d99a0b" />
			<path d="M0 16h24l6-7h38q4 0 4 4v53H0z" fill="#ffd04a" />
			<path d="M0 38h72v28H0z" fill="#fcc433" />
			<path d="M12 68V54q0-7 7-7h34q7 0 7 7v14z" fill="#1272c4" />
			<path d="M22 55h28v5H22z" fill="#075291" />
		</svg>
	);
}

function EdgeIcon() {
	return (
		<svg width="24" height="24" viewBox="0 0 72 72">
			<defs>
				<linearGradient id="edge" x1="0" x2="1">
					<stop offset="0" stopColor="#168de0" />
					<stop offset="0.5" stopColor="#2bc3d8" />
					<stop offset="1" stopColor="#69de55" />
				</linearGradient>
			</defs>
			<circle cx="36" cy="36" r="36" fill="#1269bd" />
			<path d="M1 30C4 10 20 0 36 0c20 0 36 14 36 32 0 12-9 20-21 20-10 0-12-4-10-7 8-9 0-20-14-22C16 22 6 25 1 30z" fill="url(#edge)" />
			<path d="M1 30c8-9 32-8 34 2-14 6-14 24-2 36C14 70-2 54 1 30z" fill="#128ae0" />
			<path d="M36 31c-8 8-1 28 19 28 6 0 12-2 14-4 1 2-3 7-8 10-22 4-40-14-33-28 2-4 5-6 8-6z" fill="#13508d" />
			<path d="M37 32c-4 8 0 21 15 21 9 0 15-3 18-7l1 5c-5 5-12 8-20 7-14-2-23-15-14-26z" fill="#dcdccf" />
		</svg>
	);
}

function StoreIcon() {
	return (
		<svg width="24" height="24" viewBox="0 0 72 72">
			<path d="M20 20V7q0-4 4-4h24q4 0 4 4v13" fill="none" stroke="#35c4ee" strokeWidth="5" />
			<path d="M2 15h68v48q0 7-7 7H9q-7 0-7-7z" fill="#174f8d" />
			<path d="M22 29h13v13H22z" fill="#f25022" />
			<path d="M37 29h13v13H37z" fill="#7fba00" />
			<path d="M22 44h13v13H22z" fill="#18a5ee" />
			<path d="M37 44h13v13H37z" fill="#ffb900" />
		</svg>
	);
}

function OutlookIcon() {
	return (
		<svg width="24" height="24" viewBox="0 0 72 72">
			<path d="M10 16L40 2l32 20v41q0 6-6 6H16z" fill="#0e5fb4" />
			<path d="M14 14L40 2l24 13-20 16z" fill="#29a4ea" />
			<path d="M72 30v36q0 3-4 3H22l20-18z" fill="#4cd2f5" />
			<path d="M72 14v14L44 46V30z" fill="#143e8b" />
			<rect y="14" width="43" height="43" rx="4" fill="#0c59ae" />
			<ellipse cx="21" cy="35" rx="9" ry="10" fill="none" stroke="#fff" strokeWidth="5" />
		</svg>
	);
}

function ChromeIcon() {
	return (
		<svg width="24" height="24" viewBox="0 0 72 72">
			<path d="M36 36L4.8 18a36 36 0 0 1 62.4 0z" fill="#e33b2e" />
			<path d="M36 36L67.2 18A36 36 0 0 1 36 72l16-27z" fill="#fcc934" />
			<path d="M36 36l15 9-15 27A36 36 0 0 1 4.8 18L21 45z" fill="#2c9f4b" />
			<path d="M36 18h31.2L52 45z" fill="#fcc934" />
			<circle cx="36" cy="36" r="18" fill="#fff" />
			<circle cx="36" cy="36" r="14" fill="#2f77ea" />
		</svg>
	);
}

function SnipIcon() {
	return (
		<svg width="24" height="34" viewBox="0 -30 72 102">
			<rect width="54" height="54" rx="4" fill="#ece9e7" />
			<path d="M10 38V10h28" fill="none" stroke="#d5410f" strokeWidth="8" strokeDasharray="8 2" />
			<path d="M16 38h6M38 14v6" stroke="#d5410f" strokeWidth="7" />
			<path d="M14 44h42M42 16v42" fill="none" stroke="#8c8f92" strokeWidth="7" />
			<circle cx="63" cy="42" r="7" fill="#d9f0fa" stroke="#1f9fdd" strokeWidth="5" />
			<circle cx="40" cy="64" r="6" fill="#1380c4" stroke="#28aee6" strokeWidth="4" />
		</svg>
	);
}

function KitchenIcon() {
	return (
		<svg width="42" height="22" viewBox="0 0 126 66" aria-hidden="true">
			<path d="M3 11c12 4 21 17 25 28l-8 5C8 36-2 24 3 11z" fill="#90c9e2" />
			<path d="M20 42l8-6 8 20c1 5-6 8-9 3z" fill="#b87541" />
			<path d="M40 50V36C26 30 33 12 48 13c3-15 25-15 30-2 16-3 24 18 8 25l-4 14q-20 5-42 0z" fill="#cbb1df" />
			<path d="M36 28c16 8 36 8 50-2l-4 24q-20 5-42 0z" fill="#e4d6ec" />
			<path d="M91 60l11-19" stroke="#3caf98" strokeWidth="7" strokeLinecap="round" />
			<ellipse cx="113" cy="21" rx="8" ry="16" transform="rotate(38 113 21)" fill="none" stroke="#8a8a8c" strokeWidth="3" />
			<path d="M102 38l18-29" stroke="#8a8a8c" strokeWidth="2" fill="none" />
		</svg>
	);
}

function CopilotIcon() {
	return (
		<svg width="24" height="24" viewBox="0 0 72 72">
			<defs>
				<linearGradient id="cool" x1="0" y1="0" x2="0" y2="1">
					<stop offset="0" stopColor="#1789dc" />
					<stop offset="0.5" stopColor="#34b18e" />
					<stop offset="1" stopColor="#f1cd25" />
				</linearGradient>
				<linearGradient id="warm" x1="0" y1="0" x2="0" y2="1">
					<stop offset="0" stopColor="#9b55e8" />
					<stop offset="1" stopColor="#fa6c7e" />
				</linearGradient>
			</defs>
			<path d="M22 2h24q8 0 8 12l3 8H38q-5 0-8 9l-6 18H8q-9 0-7-10l8-28q3-9 13-9z" fill="url(#cool)" />
			<path d="M44 2q10 0 12 20H40z" fill="#174fae" />
			<path d="M50 20h13q9 0 7 11l-8 22H32l6-5z" fill="url(#warm)" />
			<rect x="18" y="49" width="54" height="22" rx="4" fill="#ffc50b" />
			<text x="45" y="67" fontSize="19" fontWeight="800" textAnchor="middle" fill="#222">PRE</text>
		</svg>
	);
}

const APPS = [
	['Visão de tarefas', TaskViewIcon],
	['Explorador de Arquivos', FolderIcon],
	['Edge', EdgeIcon],
	['Microsoft Store', StoreIcon],
	['Outlook', OutlookIcon],
	['Chrome', ChromeIcon, true, '#1373cf'],
	['Ferramenta de Captura', SnipIcon, false, '#85847b'],
];

const line = { fill: 'none', stroke: 'currentColor', strokeWidth: 1.3, strokeLinecap: 'round', strokeLinejoin: 'round' };

export default function App() {
	return (
		<Desktop>
			<GlobalStyle />
			<Browser>
				<Chat>
					<Header>
						<Avatar />
						<Contact>+55 11 99583-5470</Contact>
						<Actions>
							{ACTIONS.map(([label, d]) => (
								<IconButton key={label} aria-label={label}>
									<Glyph><path fillRule="evenodd" d={d} /></Glyph>
								</IconButton>
							))}
						</Actions>
					</Header>

					<Conversation>
						<Doodles />
						<Messages>
							<Pill>HOJE</Pill>
							<Notice>
								<svg width="10" height="12" viewBox="0 0 10 12" fill="currentColor" aria-hidden="true">
									<path fillRule="evenodd" d="M2 4.5V3a3 3 0 0 1 6 0v1.5q1 0 1 1v5q0 1-1 1H2q-1 0-1-1v-5q0-1 1-1zm1.3 0h3.4V3a1.7 1.7 0 0 0-3.4 0z" />
								</svg>
								{' '}As mensagens são protegidas com a criptografia de ponta a ponta e ficam
								<br />
								somente entre você e os participantes desta conversa. Nem mesmo o WhatsApp
								<br />
								pode ler ou ouvi-las. Clique para saber mais.
							</Notice>
							<Bubble>
								<Text>
									Olá, bom dia
									<br />
									Neste contato eu falo com o Dr. LUCAS PEREIRA DELFINO?
								</Text>
								<Stamp>
									09:29
									<svg width="16" height="11" viewBox="0 0 16 11" fill="none" stroke="#7e9492" strokeWidth="1.5" aria-label="Entregue">
										<path d="M.5 6l3.5 3.5L11 .8M7 8.5l1 1L15.3.8" />
									</svg>
								</Stamp>
								<Tail width="8" height="13" viewBox="0 0 8 13">
									<path d="M0 0h5.2q2.6 0 1.3 2L0 11z" fill="#d9fdd3" />
								</Tail>
							</Bubble>
						</Messages>
						<Scroll>
							<Arrow $up />
							<Arrow />
						</Scroll>
					</Conversation>

					<Composer>
						<Tools>
							<IconButton aria-label="Emojis">
								<Glyph>
									<circle cx="12" cy="12" r="11" fill="none" stroke="currentColor" strokeWidth="1.8" />
									<ellipse cx="8.5" cy="9.3" rx="1.4" ry="1.9" />
									<ellipse cx="15.5" cy="9.3" rx="1.4" ry="1.9" />
									<path fillRule="evenodd" d="M5.3 13q6.7 1.6 13.4 0-1 6-6.7 6t-6.7-6zm1.7 1.5q5 1 10 0l-.8 1.7q-4.2.7-8.4 0z" />
								</Glyph>
							</IconButton>
							<IconButton aria-label="Anexar">
								<Glyph><path d="M11 3h2v8h8v2h-8v8h-2v-8H3v-2h8z" /></Glyph>
							</IconButton>
						</Tools>
						<InputBox>
							<Caret />
							<Input $size={15} $weight={350} $hint="#5f707a" aria-label="Digite uma mensagem" placeholder="Digite uma mensagem" />
						</InputBox>
						<IconButton aria-label="Mensagem de voz">
							<Glyph>
								<rect x="8" y="0" width="8" height="15" rx="4" />
								<path d="M4.8 11.5a7.2 7.2 0 0 0 14.4 0M12 18.5V24" fill="none" stroke="currentColor" strokeWidth="1.8" />
							</Glyph>
						</IconButton>
					</Composer>
				</Chat>
				<Side />
			</Browser>

			<Taskbar>
				<Apps>
					<Search>
						<svg width="16" height="16" viewBox="0 0 16 16" fill="none" stroke="currentColor" strokeWidth="1.8" strokeLinecap="round" aria-hidden="true">
							<circle cx="7" cy="7" r="5.5" />
							<path d="M11 11l4 4" />
						</svg>
						<Input $size={13} $hint="#5c5a54" aria-label="Pesquisar" placeholder="Pesquisar" />
						<KitchenIcon />
					</Search>
					{APPS.map(([label, Icon, active, mark]) => (
						<AppButton key={label} aria-label={label} $active={active} $mark={mark}>
							<Icon />
						</AppButton>
					))}
				</Apps>
				<Tray>
					<TrayButton $w={32} aria-label="Ícones ocultos">
						<Glyph size={16}><path d="M4 16l8-8 8 8" {...line} strokeWidth="2.2" /></Glyph>
					</TrayButton>
					<TrayButton $w={32} aria-label="OneDrive">
						<svg width="18" height="16" viewBox="0 0 18 16">
							<path d="M5 12.5a3.5 3.5 0 0 1-1-7 5 5 0 0 1 9-.5 4 4 0 0 1 1 7.5z" {...line} fill="#aaa" />
							<path d="M3 2l13 12" {...line} strokeWidth="1.6" />
						</svg>
					</TrayButton>
					<TrayButton $w={44}>POR<br />PTB2</TrayButton>
					<TrayButton $w={30} aria-label="Rede">
						<svg width="18" height="18" viewBox="0 0 18 18">
							<path d="M11 2H3q-1.5 0-1.5 1.5v8Q1.5 13 3 13h9M7 13v3M4 16.5h7M12.5 1.5h3.5v4h-3.5zM14.3 5.5v11h-2.5" {...line} />
						</svg>
					</TrayButton>
					<TrayButton $w={18} aria-label="Volume">
						<svg width="16" height="16" viewBox="0 0 16 16">
							<path d="M1 6h2.5L7 3v10l-3.5-3H1zM9 6q1.5 2 0 4M11 4q3 4 0 8" {...line} strokeWidth="1.1" />
							<path d="M13 2.5q4 5.5 0 11" {...line} stroke="#999" />
						</svg>
					</TrayButton>
					<TrayButton $w={80} $end>09:29<br />21/08/2024</TrayButton>
					<TrayButton $w={30} aria-label="Notificações">
						<svg width="16" height="16" viewBox="0 0 16 16">
							<path d="M3.5 11V6.5a4.5 4.5 0 0 1 9 0V11l1.5 2H2zM6.5 13q1.5 3 3 0" {...line} strokeWidth="1.1" />
						</svg>
					</TrayButton>
					<TrayButton $w={33} $end aria-label="Copilot">
						<CopilotIcon />
					</TrayButton>
				</Tray>
			</Taskbar>
		</Desktop>
	);
}
